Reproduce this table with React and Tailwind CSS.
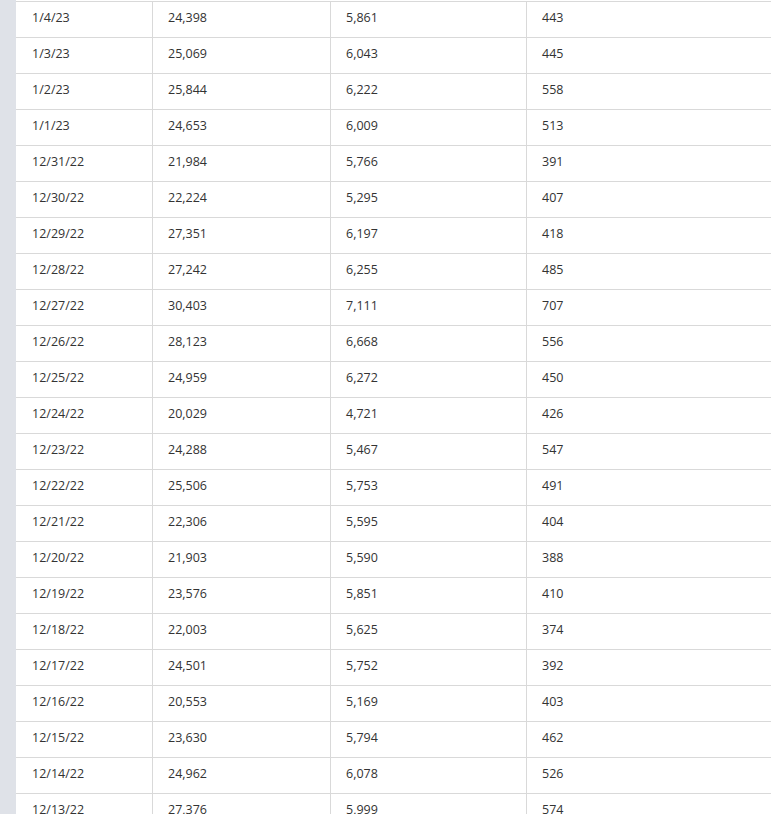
const rows = [
  ["1/4/23","24,398","5,861","443"],
  ["1/3/23","25,069","6,043","445"],
  ["1/2/23","25,844","6,222","558"],
  ["1/1/23","24,653","6,009","513"],
  ["12/31/22","21,984","5,766","391"],
  ["12/30/22","22,224","5,295","407"],
  ["12/29/22","27,351","6,197","418"],
  ["12/28/22","27,242","6,255","485"],
  ["12/27/22","30,403","7,111","707"],
  ["12/26/22","28,123","6,668","556"],
  ["12/25/22","24,959","6,272","450"],
  ["12/24/22","20,029","4,721","426"],
  ["12/23/22","24,288","5,467","547"],
  ["12/22/22","25,506","5,753","491"],
  ["12/21/22","22,306","5,595","404"],
  ["12/20/22","21,903","5,590","388"],
  ["12/19/22","23,576","5,851","410"],
  ["12/18/22","22,003","5,625","374"],
  ["12/17/22","24,501","5,752","392"],
  ["12/16/22","20,553","5,169","403"],
  ["12/15/22","23,630","5,794","462"],
  ["12/14/22","24,962","6,078","526"],
  ["12/13/22","27,376","5,999","574"],
];

export default function App() {
  return (
    <div className="flex h-[814px] w-[771px] overflow-hidden bg-white font-['Open_Sans',sans-serif] text-[12.5px] text-[#333]">
      <div className="w-[16px] shrink-0 bg-[#dfe2e8]" />
      <div className="flex-1 pt-px">
        <div className="border-t border-[#d9d9d9]">
          {rows.map((r, i) => (
            <div key={i} className="grid h-[36px] grid-cols-[137px_178px_196px_1fr] border-b border-[#d9d9d9]">
              <div className="flex items-center border-r border-[#d9d9d9] pb-[2px] pl-[16px]">{r[0]}</div>
              <div className="flex items-center border-r border-[#d9d9d9] pb-[2px] pl-[15px]">{r[1]}</div>
              <div className="flex items-center border-r border-[#d9d9d9] pb-[2px] pl-[15px]">{r[2]}</div>
              <div className="flex items-center pb-[2px] pl-[15px]">{r[3]}</div>
            </div>
          ))}
        </div>
      </div>
    </div>
  );
}
